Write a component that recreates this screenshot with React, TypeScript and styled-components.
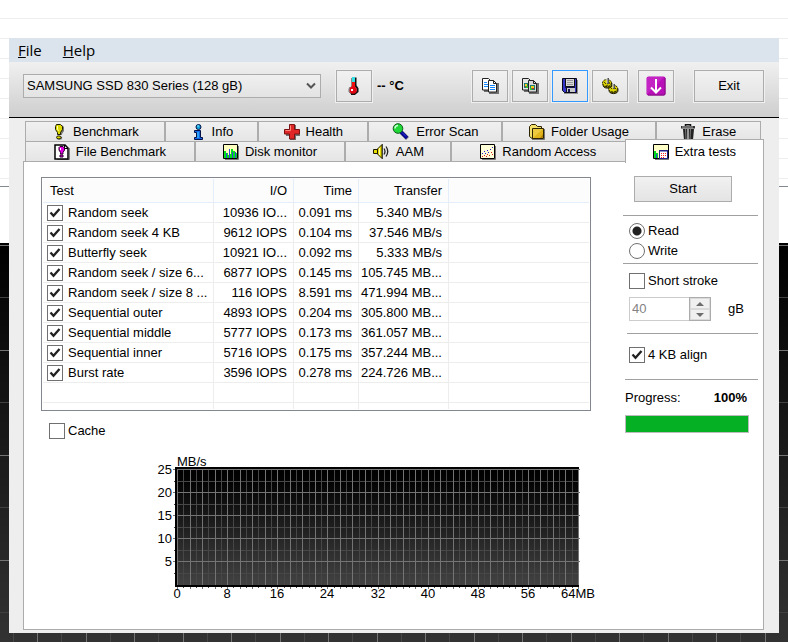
import React, { useState } from "react";
import styled, { createGlobalStyle, css } from "styled-components";

const GlobalStyle = createGlobalStyle`
  *, *::before, *::after { box-sizing: border-box; }
  html, body { margin: 0; background: #ffffff; }
  body, button, input, select {
    font-family: "Liberation Sans", Arial, sans-serif;
    font-size: 13px;
    line-height: 16px;
    color: #000000;
  }
`;

const uiColors = {
  face: "#eeeeee",
  edge: "#acacac",
  frame: "#828790",
  cell: "#ededed",
};

const checkMark =
  "url(\"data:image/svg+xml,%3Csvg xmlns='http://www.w3.org/2000/svg' viewBox='0 0 14 14'%3E%3Cpath d='M2.5 6.5L5.5 9.8L11.5 3' fill='none' stroke='%23212121' stroke-width='2.3'/%3E%3C/svg%3E\")";

/* ---------- desktop ---------- */

const Desktop = styled.div`
  position: relative;
  z-index: 0;
  display: flex;
  min-height: 100vh;
  padding: 38px 9px 9px;
  background:
    linear-gradient(${uiColors.frame}, ${uiColors.frame}) 0 186px / 100% 1px no-repeat,
    linear-gradient(#ffffff, #ffffff) 0 187px / 100% 100% no-repeat,
    linear-gradient(#eeeeee 1px, transparent 1px) 0 18px / 100% 20px;

  &::before {
    content: "";
    position: absolute;
    z-index: -1;
    inset: 243px 0 0;
    background:
      linear-gradient(#747474 1px, transparent 1px 52px, #404040 52px 53px, transparent 53px) 0 2px / 100% 105px,
      linear-gradient(90deg, #747474 1px, transparent 1px 24px, #464646 24px 25px, transparent 25px 49px, #747474 49px 50px, transparent 50px 73px, #464646 73px 74px, transparent 74px) 37px 0 / 97px 100%,
      linear-gradient(#000000, #323232);
  }
`;

const AppWindow = styled.main`
  flex: 1;
  min-width: 0;
  display: flex;
  flex-direction: column;
  background: ${uiColors.face};
`;

const MenuBar = styled.nav`
  display: flex;
  height: 24px;
  background: #dbe3ec;
`;

const MenuButton = styled.button`
  border: 0;
  padding: 0 9px;
  margin-right: 3px;
  background: none;
  font-family: "Open Sans", "Noto Sans", sans-serif;
  font-size: 15px;
  line-height: 24px;

  &::first-letter { text-decoration: underline; }
`;

const Toolbar = styled.header`
  display: flex;
  align-items: center;
  padding: 8px 15px 15px 14px;
  background: linear-gradient(#f0f0f0, #cecece);
  border-bottom: 1px solid #000000;
`;

const DriveField = styled.label`
  position: relative;
  display: flex;
  flex: 0 1 298px;
  min-width: 0;
`;

const DriveSelect = styled.select`
  appearance: none;
  width: 100%;
  height: 24px;
  padding: 0 24px 0 3px;
  border: 1px solid ${uiColors.edge};
  border-radius: 0;
  background: linear-gradient(#f0f0f0, #e3e3e3);
`;

const DriveArrow = styled.svg`
  position: absolute;
  right: 5px;
  top: 8px;
  pointer-events: none;
`;

const buttonFace = css`
  border: 1px solid ${uiColors.edge};
  background: linear-gradient(#f1f1f1, #e4e4e4);
  padding: 0;
`;

const ToolButton = styled.button<{ $active?: boolean }>`
  ${buttonFace}
  display: flex;
  align-items: center;
  justify-content: center;
  flex: none;
  width: 36px;
  height: 32px;
  outline: 1px solid #f0f0f0;
  border-color: ${(p) => (p.$active ? "#3399ff" : uiColors.edge)};
`;

const ExitButton = styled(ToolButton)`
  width: 70px;
  margin-left: 20px;
`;

const Temperature = styled.div`
  display: flex;
  align-items: center;
  gap: 5px;
  margin-left: 15px;
  font-weight: bold;
  white-space: nowrap;
`;

const ToolGroup = styled.div`
  display: flex;
  gap: 4px;
  margin-left: auto;
  margin-right: 10px;
`;

/* ---------- tabs ---------- */

const TabRows = styled.div`
  display: flex;
  flex-direction: column;
  padding: 3px 15px 0 16px;
`;

const TabRow = styled.div<{ $inset?: boolean }>`
  display: flex;
  height: 20px;
  margin-right: ${(p) => (p.$inset ? "3px" : "0")};
`;

const Tab = styled.button<{ $weight: number; $active?: boolean }>`
  display: flex;
  align-items: center;
  justify-content: center;
  gap: 6px;
  flex: ${(p) => p.$weight} 1 0;
  min-width: 0;
  height: 20px;
  padding: 0;
  border: 1px solid ${uiColors.edge};
  border-bottom: 0;
  background: linear-gradient(#f0f0f0, #e5e5e5);
  white-space: nowrap;

  svg { flex: none; }

  ${(p) =>
    p.$active &&
    css`
      position: relative;
      z-index: 1;
      height: 24px;
      margin: -2px 0 -2px -1px;
      background: #ffffff;
    `}
`;

const Panel = styled.section`
  flex: 1;
  display: grid;
  grid-template-columns: minmax(0, 1fr) 135px;
  column-gap: 32px;
  margin: 0 15px 3px 14px;
  padding: 14px 5px 24px 17px;
  border: 1px solid ${uiColors.edge};
  background: #ffffff;
`;

/* ---------- results ---------- */

const Results = styled.div`
  margin-top: 1px;
  padding: 1px;
  border: 1px solid ${uiColors.frame};
`;

const ResultTable = styled.table`
  width: 100%;
  table-layout: fixed;
  border-collapse: separate;
  border-spacing: 0;
`;

const Column = styled.col<{ $width?: number }>`
  width: ${(p) => (p.$width ? `${p.$width}px` : "auto")};
`;

const HeadCell = styled.th<{ $left?: boolean }>`
  height: 24px;
  padding: 0 6px 0 7px;
  background: #fcfcfc;
  border-bottom: 1px solid #e3eefa;
  border-right: 1px solid #e3eefa;
  font-weight: normal;
  text-align: ${(p) => (p.$left ? "left" : "right")};

  &:last-child { border-right: 0; }
`;

const Cell = styled.td<{ $short?: boolean }>`
  height: ${(p) => (p.$short ? "6px" : "20px")};
  padding: 1px 6px 0 0;
  border-bottom: ${(p) => (p.$short ? "0" : `1px solid ${uiColors.cell}`)};
  border-right: 1px solid ${uiColors.cell};
  text-align: right;
  white-space: nowrap;

  &:first-child { padding: 0 0 0 4px; text-align: left; }
  &:last-child { border-right: 0; }
`;

const CheckLabel = styled.label<{ $gap?: number }>`
  display: flex;
  align-items: center;
  gap: ${(p) => p.$gap ?? 3}px;
  white-space: nowrap;
`;

const CheckBox = styled.input.attrs({ type: "checkbox" })`
  appearance: none;
  flex: none;
  width: 16px;
  height: 16px;
  margin: 0;
  border: 1px solid #707070;
  background-color: #ffffff;

  &:checked { background-image: ${checkMark}; }
`;

const RadioButton = styled.input.attrs({ type: "radio" })`
  appearance: none;
  flex: none;
  width: 16px;
  height: 16px;
  margin: 0;
  border: 1px solid #707070;
  border-radius: 50%;
  background: #ffffff;

  &:checked { background: radial-gradient(circle, #212121 4px, #ffffff 5px); }
`;

const CacheRow = styled.div`
  display: flex;
  padding: 12px 0 0 8px;
`;

const ChartArea = styled.div`
  display: flex;
  padding: 12px 0 0 110px;
`;

const Chart = styled.svg`
  flex: none;
`;

const ChartText = styled.text`
  font-size: 13px;
  fill: #000000;
`;

/* ---------- side column ---------- */

const Side = styled.aside`
  display: flex;
  flex-direction: column;
`;

const StartButton = styled.button`
  ${buttonFace}
  height: 26px;
  margin: 0 26px 13px 11px;
`;

const Group = styled.div<{ $height: number; $indent?: number; $pad: number }>`
  display: flex;
  flex-direction: column;
  gap: 4px;
  min-height: ${(p) => p.$height}px;
  margin-left: ${(p) => p.$indent ?? 0}px;
  padding-top: ${(p) => p.$pad}px;
  padding-left: ${(p) => 6 - (p.$indent ?? 0)}px;
  border-top: 1px solid #a0a0a0;
`;

const SizeRow = styled.div`
  display: flex;
  align-items: center;
  gap: 17px;
  margin-top: 4px;
`;

const Spinner = styled.div`
  display: flex;
  width: 82px;
  height: 24px;
`;

const SpinnerInput = styled.input`
  flex: 1;
  min-width: 0;
  padding: 0 2px;
  border: 1px solid #cccccc;
  border-right: 0;
  border-radius: 0;
  background: #ffffff;
  color: #838383;
`;

const SpinnerButtons = styled.div`
  display: grid;
  grid-template-rows: 1fr 1fr;
  width: 22px;
  border: 1px solid ${uiColors.edge};
`;

const SpinnerButton = styled.button`
  display: flex;
  align-items: center;
  justify-content: center;
  min-height: 0;
  padding: 0;
  border: 1px solid #dadada;
  background: #f0f0f0;
`;

const ProgressGroup = styled.div`
  margin-left: 2px;
  padding-top: 10px;
  border-top: 1px solid #a0a0a0;
`;

const ProgressHead = styled.div`
  display: flex;
  justify-content: space-between;
  margin-right: 11px;
`;

const ProgressBar = styled.progress`
  appearance: none;
  display: block;
  width: calc(100% - 9px);
  height: 18px;
  margin-top: 9px;
  border: 1px solid #bcbcbc;
  background: #e6e6e6;

  &::-webkit-progress-bar { background: #e6e6e6; }
  &::-webkit-progress-value { background: #06b025; }
`;

/* ---------- icons ---------- */

const Icon = ({ children, size = 16 }: { children: React.ReactNode; size?: number }) => (
  <svg width={size} height={size} viewBox={`0 0 ${size} ${size}`} aria-hidden="true">
    {children}
  </svg>
);

const ThermometerIcon = () => (
  <Icon size={20}>
    <path d="M11.5 1.5v8l2 3v3l-3 2.500H7" fill="none" stroke="#111" strokeWidth="2" />
    <path d="M8 2h3v10H8z" fill="#f01010" />
    <path d="M8 1h3v5H8z" fill="#35dfe6" />
    <path d="M7 2h1v9H7z" fill="#8a8a8a" />
    <circle cx="9" cy="14" r="3.8" fill="#e30613" />
    <path d="M6 11l-1 2v3l2 2" fill="none" stroke="#777" />
    <path d="M7 13h2v2H7z" fill="#ffffff" />
  </Icon>
);

const PagesIcon = ({ picture }: { picture?: boolean }) => (
  <Icon size={20}>
    <path d="M4 15h4M9 17h9V7" fill="none" stroke="#707070" strokeWidth="2" />
    <path d="M2.5 2.5h6l2 2v9.500h-8z" fill={picture ? "#e4e4e4" : "#fff"} stroke="#222" />
    <path d="M8.500 4.500h5l3 3v8.500h-8z" fill={picture ? "#d8d8d8" : "#fff"} stroke="#222" />
    <path d="M13.500 4.500v3h3" fill="none" stroke="#222" />
    {picture ? (
      <>
        <path d="M4 7h4v5H4zM10 9h5v5h-5z" fill="#1d7f72" />
        <path d="M5 8h2v2H5zM11 10h3v2h-3z" fill="#f0d020" />
        <path d="M5 10h1v1H5zM12 12h2v1h-2z" fill="#e02020" />
        <path d="M6 10h2v2H6zM10 12h2v2h-2z" fill="#30c030" />
      </>
    ) : (
      <path d="M4 6.500h3M4 8.500h4M4 10.500h4M10 9.500h5M10 11.500h5M10 13.500h5" stroke="#1688ff" />
    )}
  </Icon>
);

const FloppyIcon = () => (
  <Icon>
    <path d="M2 2h14v14H2z" fill="#909090" />
    <path d="M.5.5h14v14h-12l-2-2z" fill="#3434c8" stroke="#080818" />
    <path d="M4 1h8v7H4z" fill="#d8d8d8" />
    <path d="M5 2.500h6M5 4.500h6M5 6.500h6" stroke="#999" />
    <path d="M3 9h10v1H3z" fill="#111150" />
    <path d="M5 10h8v4H5z" fill="#c8c8c8" />
    <path d="M6 11h2v3H6z" fill="#181850" />
    <path d="M3.500 1v7.500h9V1M4.500 14v-4.500" fill="none" stroke="#111" />
  </Icon>
);

const GearsIcon = () => (
  <Icon size={18}>
    <g stroke="#191900">
      <ellipse cx="12.500" cy="13" rx="4.500" ry="3.600" fill="#655c00" />
      <ellipse cx="12" cy="11.500" rx="4.500" ry="3.500" fill="#d8d000" strokeDasharray="2 1" />
      <ellipse cx="6.500" cy="7.500" rx="4.500" ry="3.600" fill="#655c00" />
      <ellipse cx="6" cy="6" rx="4.500" ry="3.500" fill="#d8d000" strokeDasharray="2 1" />
    </g>
    <path d="M3 5l2 2M8 5l1 2M5 9l2-1M10 11l1 1M14 11l1 1" stroke="#4a4500" />
    <path d="M7 1v6M13 7v5" stroke="#555" strokeWidth="2" />
    <path d="M6 1v5M12 7v4" stroke="#ddd" />
  </Icon>
);

const DownloadIcon = () => (
  <Icon size={20}>
    <rect width="19" height="19" x="0.500" y="0.500" rx="2" fill="#b80fb8" />
    <path d="M1 18V2q0-1 1-1h16L1 18z" fill="#cf36cf" opacity=".55" />
    <path d="M2 19h16q1 0 1-1V2" fill="none" stroke="#80107f" />
    <path d="M10 3v13M5 11.500l5 5 5-5" fill="none" stroke="#fff" strokeWidth="2" />
  </Icon>
);

const BenchmarkIcon = () => (
  <Icon>
    <path d="M7 1h4l2 2v4l-2 3v1H8V9L6 6V2z" fill="#777" />
    <path d="M5.500.5h4l2 2v3l-2 3v2h-3v-2l-2-3v-3z" fill="#dcd800" stroke="#1c1c00" />
    <path d="M6.500 2v3l1 2" fill="none" stroke="#ffffb0" />
    <ellipse cx="8.500" cy="14" rx="2.800" ry="1.700" fill="#777" />
    <ellipse cx="7.800" cy="13.400" rx="2.300" ry="1.500" fill="#dcd800" stroke="#1c1c00" />
  </Icon>
);

const FileBenchmarkIcon = () => (
  <Icon>
    <path d="M3 15.500h12.500V4" fill="none" stroke="#808080" />
    <path d="M1 1h10l3 3v11H1z" fill="#fff" stroke="#000" strokeWidth="1.500" />
    <path d="M10.500 1v3.500H14" fill="none" stroke="#000" />
    <path d="M6 2.500h3l1.500 1.500v2L9 8.500V10H6.500V8.500L5 6V3.500z" fill="#e400e4" stroke="#300030" />
    <path d="M6.500 4v2" stroke="#fff" />
    <path d="M6 11h3v2H6z" fill="#e400e4" stroke="#300030" />
  </Icon>
);

const InfoIcon = () => (
  <Icon>
    <circle cx="8.500" cy="3" r="2.500" fill="#12a5dd" stroke="#041048" />
    <path d="M4.500 6.500h6v7h2v2h-8v-2h2v-5h-2z" fill="#1068e8" stroke="#041048" />
    <path d="M8 8v6" stroke="#34b4ff" strokeWidth="1.500" />
    <path d="M7 2h2" stroke="#7feaff" />
  </Icon>
);

const HealthIcon = () => (
  <Icon>
    <path d="M6 1h6v5h4v6h-4v4H6v-4H2V6h4z" fill="#707070" />
    <path d="M5.500.5h5v5h5v4.500h-5v5h-5v-5h-5V5.500h5z" fill="#e02626" stroke="#7c1010" />
    <path d="M6.500 6.500h-5M6.500 6.500v-5" stroke="#ff8a80" />
  </Icon>
);

const MagnifierIcon = () => (
  <Icon size={18}>
    <path d="M9.500 9.500l6 6" stroke="#777" strokeWidth="4" />
    <path d="M9 9l6 6" stroke="#050590" strokeWidth="3.500" />
    <path d="M10 9.500l4 4" stroke="#3535e0" />
    <circle cx="6" cy="5.500" r="4.800" fill="#20d838" stroke="#0a5a18" />
    <path d="M3 5.500q0-3 3-3" fill="none" stroke="#c8ffd0" strokeWidth="1.500" />
  </Icon>
);

const FolderIcon = () => (
  <Icon>
    <path d="M3 15.500h12.500V5" fill="none" stroke="#777" />
    <path d="M.5 2.500l2-2h4l2 2h4v12H3l-2.500-2z" fill="#f2e06a" stroke="#2c2400" />
    <path d="M3.500 4.500h11v10h-11z" fill="#e0b41c" stroke="#2c2400" />
    <path d="M4 14l10-9H4z" fill="#eccb40" />
    <path d="M11 14h3v-4z" fill="#b58408" />
  </Icon>
);

const BinIcon = () => (
  <Icon>
    <path d="M5.500 2V.8h5V2" fill="none" stroke="#111" strokeWidth="1.500" />
    <path d="M1 2h14v2.500H1z" fill="#333" />
    <path d="M2 3h11" stroke="#aaa" />
    <path d="M3 5h11l-1 11H4z" fill="#222" />
    <path d="M5.500 5l.5 10" stroke="#777" />
    <path d="M8 5v10" stroke="#c0c0c0" strokeWidth="1.500" />
    <path d="M10.500 5L10 15" stroke="#777" />
  </Icon>
);

const MonitorIcon = () => (
  <Icon>
    <path d="M2 15.500h13.500V2" fill="none" stroke="#777" />
    <path d="M.5.5h14v14H.5z" fill="#ffffc0" stroke="#000" />
    <path d="M1 7h2v2h2v2h1V6h1v4h1V5h2v2h2v2h2v5H1z" fill="#00e018" />
    <path d="M3 9h1v5H3zM6 5h1v9H6zM9 8h1v6H9zM12 8h1v6h-1z" fill="#3344d8" />
  </Icon>
);

const SpeakerIcon = () => (
  <Icon size={18}>
    <path d="M1.500 6.500H5l5-5v14l-5-5H1.500z" fill="#e6dc00" stroke="#1c1a00" />
    <path d="M5.500 6v5" stroke="#1c1a00" />
    <path d="M7.500 5v7" stroke="#ffffb0" />
    <path d="M10.500 1v15" stroke="#444" />
    <path d="M12 5.500q2 3 0 6M14 3.500q3.500 5 0 10" fill="none" stroke="#222" strokeWidth="1.300" />
  </Icon>
);

const ScatterIcon = () => (
  <Icon>
    <path d="M2 15.500h13.500V2" fill="none" stroke="#777" />
    <path d="M.5.5h14v14H.5z" fill="#ffffd8" stroke="#000" />
    <path d="M2 9h1v1H2zM4 7h1v1H4zM5 9h1v1H5zM7 6h1v1H7zM8 8h1v1H8zM10 5h1v1h-1zM12 3h1v1h-1z" fill="#2222dd" />
    <path d="M2 12h1v1H2zM4 11h1v1H4zM6 12h1v1H6zM7 10h1v1H7zM9 11h1v1H9zM11 8h1v1h-1zM12 10h1v1h-1z" fill="#e02020" />
  </Icon>
);

const ExtraTestsIcon = () => (
  <Icon>
    <path d="M2 15.500h14" fill="none" stroke="#777" />
    <path d="M.5.5h15v14H.5z" fill="#ffffc8" stroke="#000" />
    <path d="M1 7h2v2h2v5H1z" fill="#00d820" />
    <path d="M3 10h1v4H3z" fill="#3344d8" />
    <path d="M6.500 6.500h8v8h-8z" fill="#fff" stroke="#20208a" />
    <path d="M6 6h9v1.500H6z" fill="#20208a" />
    <path d="M8 9h1v1H8zM10 9h1v1h-1zM12 9h1v1h-1zM8 11h1v1H8zM10 11h1v1h-1zM12 11h1v1h-1zM8 13h1v1H8zM10 13h1v1h-1z" fill="#ff2020" />
  </Icon>
);

/* ---------- chart ---------- */

const plot = { left: 26, top: 18, width: 401 };

const SpeedChart = () => {
  const verticals = Array.from({ length: 65 }, (_, i) => ({
    i,
    x: Math.round(plot.left + (i * plot.width) / 64),
  }));
  const horizontals = Array.from({ length: 10 }, (_, i) => ({
    i,
    y: Math.round(plot.top + i * 11.55),
  }));
  return (
    <Chart width="446" height="152" viewBox="0 0 446 152" role="img" aria-label="Transfer speed chart">
      <defs>
        <linearGradient id="plotFill" x1="0" y1="0" x2="0" y2="1">
          <stop offset="0" stopColor="#000000" />
          <stop offset="0.12" stopColor="#040404" />
          <stop offset="1" stopColor="#424242" />
        </linearGradient>
      </defs>
      <g shapeRendering="crispEdges">
        <rect x="24" y="16" width="404" height="120" fill="#000000" />
        <rect x="26" y="18" width="401" height="116" fill="url(#plotFill)" />
        {verticals.map(({ i, x }) =>
          i % 2 ? <rect key={i} x={x} y={18} width={1} height={119} fill="#474747" /> : null
        )}
        {horizontals.map(({ i, y }) =>
          i % 2 ? <rect key={i} x={23} y={y} width={405} height={1} fill="#474747" /> : null
        )}
        {verticals.map(({ i, x }) =>
          i % 2 ? null : <rect key={i} x={x} y={18} width={1} height={120} fill="#747474" />
        )}
        {horizontals.map(({ i, y }) =>
          i % 2 ? null : <rect key={i} x={22} y={y} width={407} height={1} fill="#747474" />
        )}
        <rect x="24" y="16" width="2" height="120" fill="#000000" />
        <rect x="24" y="134" width="404" height="2" fill="#000000" />
      </g>
      <ChartText x="26" y="15">MB/s</ChartText>
      {[25, 20, 15, 10, 5].map((value, i) => (
        <ChartText key={value} x="21" y={Math.round(23 + i * 23.1)} textAnchor="end">
          {value}
        </ChartText>
      ))}
      {[0, 8, 16, 24, 32, 40, 48, 56, 64].map((value) => (
        <ChartText
          key={value}
          x={Math.round(plot.left + (value * plot.width) / 64)}
          y="147"
          textAnchor="middle"
        >
          {value === 64 ? "64MB" : value}
        </ChartText>
      ))}
    </Chart>
  );
};

/* ---------- data ---------- */

const upperTabs = [
  { label: "Benchmark", weight: 140, icon: <BenchmarkIcon /> },
  { label: "Info", weight: 93, icon: <InfoIcon /> },
  { label: "Health", weight: 110, icon: <HealthIcon /> },
  { label: "Error Scan", weight: 134, icon: <MagnifierIcon /> },
  { label: "Folder Usage", weight: 154, icon: <FolderIcon /> },
  { label: "Erase", weight: 105, icon: <BinIcon /> },
];

const lowerTabs = [
  { label: "File Benchmark", weight: 170, icon: <FileBenchmarkIcon /> },
  { label: "Disk monitor", weight: 150, icon: <MonitorIcon /> },
  { label: "AAM", weight: 105, icon: <SpeakerIcon /> },
  { label: "Random Access", weight: 175, icon: <ScatterIcon /> },
  { label: "Extra tests", weight: 139, icon: <ExtraTestsIcon />, active: true },
];

const tests = [
  ["Random seek", "10936 IO...", "0.091 ms", "5.340 MB/s"],
  ["Random seek 4 KB", "9612 IOPS", "0.104 ms", "37.546 MB/s"],
  ["Butterfly seek", "10921 IO...", "0.092 ms", "5.333 MB/s"],
  ["Random seek / size 6...", "6877 IOPS", "0.145 ms", "105.745 MB..."],
  ["Random seek / size 8 ...", "116 IOPS", "8.591 ms", "471.994 MB..."],
  ["Sequential outer", "4893 IOPS", "0.204 ms", "305.800 MB..."],
  ["Sequential middle", "5777 IOPS", "0.173 ms", "361.057 MB..."],
  ["Sequential inner", "5716 IOPS", "0.175 ms", "357.244 MB..."],
  ["Burst rate", "3596 IOPS", "0.278 ms", "224.726 MB..."],
];

const EmptyRow = ({ short }: { short?: boolean }) => (
  <tr>
    {[0, 1, 2, 3, 4].map((n) => (
      <Cell key={n} $short={short} />
    ))}
  </tr>
);

export default function App() {
  const [mode, setMode] = useState("read");

  return (
    <>
      <GlobalStyle />
      <Desktop>
        <AppWindow>
          <MenuBar>
            <MenuButton>File</MenuButton>
            <MenuButton>Help</MenuButton>
          </MenuBar>

          <Toolbar>
            <DriveField>
              <DriveSelect aria-label="Drive">
                <option>SAMSUNG SSD 830 Series (128 gB)</option>
              </DriveSelect>
              <DriveArrow width="10" height="8" viewBox="0 0 10 8" aria-hidden="true">
                <path d="M1 1.500l4 4 4-4" fill="none" stroke="#555" strokeWidth="2" />
              </DriveArrow>
            </DriveField>
            <Temperature>
              <ToolButton aria-label="Temperature">
                <ThermometerIcon />
              </ToolButton>
              <span>-- °C</span>
            </Temperature>
            <ToolGroup>
              <ToolButton aria-label="Copy text">
                <PagesIcon />
              </ToolButton>
              <ToolButton aria-label="Copy picture">
                <PagesIcon picture />
              </ToolButton>
              <ToolButton aria-label="Save" $active>
                <FloppyIcon />
              </ToolButton>
              <ToolButton aria-label="Options">
                <GearsIcon />
              </ToolButton>
            </ToolGroup>
            <ToolButton aria-label="Download">
              <DownloadIcon />
            </ToolButton>
            <ExitButton>Exit</ExitButton>
          </Toolbar>

          <TabRows role="tablist">
            <TabRow $inset>
              {upperTabs.map((tab) => (
                <Tab key={tab.label} role="tab" $weight={tab.weight}>
                  {tab.icon}
                  {tab.label}
                </Tab>
              ))}
            </TabRow>
            <TabRow>
              {lowerTabs.map((tab) => (
                <Tab
                  key={tab.label}
                  role="tab"
                  aria-selected={!!tab.active}
                  $weight={tab.weight}
                  $active={tab.active}
                >
                  {tab.icon}
                  {tab.label}
                </Tab>
              ))}
            </TabRow>
          </TabRows>

          <Panel>
            <div>
              <Results>
                <ResultTable>
                  <colgroup>
                    <Column $width={171} />
                    <Column $width={80} />
                    <Column $width={65} />
                    <Column $width={90} />
                    <Column />
                  </colgroup>
                  <thead>
                    <tr>
                      <HeadCell $left>Test</HeadCell>
                      <HeadCell>I/O</HeadCell>
                      <HeadCell>Time</HeadCell>
                      <HeadCell>Transfer</HeadCell>
                      <HeadCell />
                    </tr>
                  </thead>
                  <tbody>
                    {tests.map(([name, io, time, transfer]) => (
                      <tr key={name}>
                        <Cell>
                          <CheckLabel $gap={5}>
                            <CheckBox defaultChecked />
                            {name}
                          </CheckLabel>
                        </Cell>
                        <Cell>{io}</Cell>
                        <Cell>{time}</Cell>
                        <Cell>{transfer}</Cell>
                        <Cell />
                      </tr>
                    ))}
                    <EmptyRow />
                    <EmptyRow short />
                  </tbody>
                </ResultTable>
              </Results>
              <CacheRow>
                <CheckLabel>
                  <CheckBox />
                  Cache
                </CheckLabel>
              </CacheRow>
              <ChartArea>
                <SpeedChart />
              </ChartArea>
            </div>

            <Side>
              <StartButton>Start</StartButton>
              <Group $height={48} $pad={7} role="radiogroup" aria-label="Mode">
                <CheckLabel>
                  <RadioButton name="mode" checked={mode === "read"} onChange={() => setMode("read")} />
                  Read
                </CheckLabel>
                <CheckLabel>
                  <RadioButton name="mode" checked={mode === "write"} onChange={() => setMode("write")} />
                  Write
                </CheckLabel>
              </Group>
              <Group $height={70} $pad={9}>
                <CheckLabel>
                  <CheckBox />
                  Short stroke
                </CheckLabel>
                <SizeRow>
                  <Spinner>
                    <SpinnerInput id="stroke-size" aria-label="Stroke size" defaultValue="40" disabled />
                    <SpinnerButtons>
                      <SpinnerButton aria-label="Increase" disabled>
                        <svg width="8" height="4" viewBox="0 0 8 4" aria-hidden="true">
                          <path d="M0 4l4-4 4 4z" fill="#6d6d6d" />
                        </svg>
                      </SpinnerButton>
                      <SpinnerButton aria-label="Decrease" disabled>
                        <svg width="8" height="4" viewBox="0 0 8 4" aria-hidden="true">
                          <path d="M0 0l4 4 4-4z" fill="#6d6d6d" />
                        </svg>
                      </SpinnerButton>
                    </SpinnerButtons>
                  </Spinner>
                  <label htmlFor="stroke-size">gB</label>
                </SizeRow>
              </Group>
              <Group $height={46} $pad={13} $indent={4}>
                <CheckLabel>
                  <CheckBox defaultChecked />
                  4 KB align
                </CheckLabel>
              </Group>
              <ProgressGroup>
                <ProgressHead>
                  <label htmlFor="progress">Progress:</label>
                  <strong>100%</strong>
                </ProgressHead>
                <ProgressBar id="progress" max={100} value={100} />
              </ProgressGroup>
            </Side>
          </Panel>
        </AppWindow>
      </Desktop>
    </>
  );
}
